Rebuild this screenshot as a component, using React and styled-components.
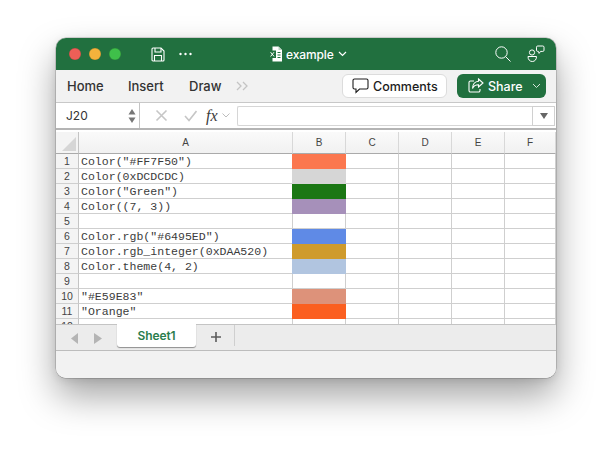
import React from 'react';
import styled, { createGlobalStyle } from 'styled-components';

const UI_FONT = '"Inter", "Liberation Sans", sans-serif';

const GlobalStyle = createGlobalStyle`
  html, body {
    margin: 0;
    padding: 0;
    background: #ffffff;
  }
  body {
    width: 612px;
    height: 452px;
    overflow: hidden;
  }
`;

const Page = styled.div`
  padding: 38px 56px 0;
`;

const Window = styled.div`
  width: 500px;
  height: 340px;
  border-radius: 10px;
  overflow: hidden;
  background: #f2f2f2;
  display: flex;
  flex-direction: column;
  box-shadow: 0 0 0 0.5px rgba(0, 0, 0, 0.28), 0 18px 36px rgba(0, 0, 0, 0.36), 0 2px 8px rgba(0, 0, 0, 0.1);
`;

//#region title bar
const TitleBar = styled.div`
  height: 32px;
  flex: none;
  background: #21703f;
  display: flex;
  align-items: center;
  padding-left: 13px;
  color: #fff;
  font-family: ${UI_FONT};
`;
const Lights = styled.div`
  display: flex;
  gap: 8px;
`;
const Light = styled.span`
  width: 12px;
  height: 12px;
  border-radius: 50%;
  background: ${props => props.$color};
  box-shadow: inset 0 0 0 0.5px rgba(0, 0, 0, 0.2);
`;
const SaveButton = styled.svg`
  margin-left: 30px;
  width: 14px;
  height: 15px;
`;
const Dots = styled.svg`
  margin-left: 14px;
  width: 13px;
  height: 4px;
`;
const FileIcon = styled.svg`
  margin-left: 77px;
  width: 13px;
  height: 16px;
`;
const FileName = styled.span`
  margin-left: 4px;
  font-size: 12px;
  font-weight: 500;
  letter-spacing: -0.1px;
`;
const TitleChevron = styled.svg`
  margin-left: 4px;
  width: 9px;
  height: 6px;
`;
const SearchIcon = styled.svg`
  margin-left: 148px;
  width: 16px;
  height: 16px;
`;
const PeopleIcon = styled.svg`
  margin-left: 16px;
  width: 18px;
  height: 18px;
`;
//#endregion

//#region ribbon
const Ribbon = styled.div`
  height: 32px;
  flex: none;
  box-sizing: border-box;
  background: #f2f2f2;
  display: flex;
  align-items: center;
  padding: 0 10px 0 11px;
  font-family: ${UI_FONT};
  font-size: 12.5px;
  font-weight: 500;
  color: #333;
`;
const RibbonTab = styled.span`
  width: ${props => props.$width}px;
  font-size: 13px;
`;
const MoreIcon = styled.svg`
  width: 13px;
  height: 10px;
`;
const RibbonActions = styled.div`
  margin-left: auto;
  display: flex;
  gap: 10px;
`;
const CommentsButton = styled.div`
  width: 105px;
  height: 24px;
  box-sizing: border-box;
  border: 1px solid #dcdcdc;
  border-radius: 6px;
  background: #fff;
  color: #1c1c1c;
  display: flex;
  align-items: center;
  gap: 4px;
  padding-left: 9px;
`;
const ShareButton = styled.div`
  width: 89px;
  height: 24px;
  box-sizing: border-box;
  border-radius: 6px;
  background: #21703f;
  color: #fff;
  display: flex;
  align-items: center;
  padding-left: 11px;
`;
const ShareLabel = styled.span`
  margin-left: 4px;
`;
const ShareChevron = styled.svg`
  margin-left: 9px;
  width: 9px;
  height: 6px;
`;
//#endregion

//#region formula bar
const FormulaBar = styled.div`
  height: 28px;
  flex: none;
  box-sizing: border-box;
  border-top: 1px solid #c8c8c8;
  border-bottom: 2px solid #b4b4b4;
  background: #fff;
  display: flex;
  font-family: ${UI_FONT};
`;
const NameBox = styled.div`
  width: 84px;
  box-sizing: border-box;
  background: #fff;
  border-right: 1px solid #c4c4c4;
  display: flex;
  align-items: center;
  justify-content: space-between;
  padding: 0 3px 0 10px;
  font-size: 12px;
  color: #333;
`;
const Stepper = styled.svg`
  width: 8px;
  height: 18px;
`;
const FormulaTools = styled.div`
  width: 97px;
  flex: none;
  box-sizing: border-box;
  display: flex;
  align-items: center;
  padding-left: 15px;
`;
const ToolIcon = styled.svg`
  width: 13px;
  height: 13px;
  margin-right: ${props => props.$gap}px;
`;
const FxLabel = styled.span`
  font-family: "Liberation Serif", serif;
  font-style: italic;
  font-size: 16px;
  color: #3c3c3c;
`;
const FxChevron = styled.svg`
  margin-left: 4px;
  width: 8px;
  height: 5px;
`;
const FormulaInput = styled.div`
  flex: 1;
  margin-top: 3px;
  height: 20px;
  box-sizing: border-box;
  border: 1px solid #d6d6d6;
  border-right: none;
  border-radius: 2px 0 0 2px;
`;
const FormulaDrop = styled.div`
  width: 23px;
  flex: none;
  margin: 3px 1px 0 0;
  height: 20px;
  box-sizing: border-box;
  border: 1px solid #d0d0d0;
  display: flex;
  align-items: center;
  justify-content: center;
`;
const DropArrow = styled.span`
  width: 0;
  height: 0;
  border-left: 4px solid transparent;
  border-right: 4px solid transparent;
  border-top: 6px solid #666;
`;
//#endregion

//#region sheet grid
const Sheet = styled.div`
  height: 194px;
  flex: none;
  overflow: hidden;
  background: #fff;
  display: grid;
  grid-template-columns: 23px 214px 53px 53px 53px 53px 51px;
  grid-template-rows: 22px;
  grid-auto-rows: 15px;
  padding-top: 2px;
  box-sizing: border-box;
`;
const Corner = styled.div`
  box-sizing: border-box;
  background: #f4f4f4;
  border-right: 1px solid #c4c4c4;
  border-bottom: 1px solid #aaa;
  position: relative;
  &::after {
    content: '';
    position: absolute;
    right: 2px;
    bottom: 2px;
    border-left: 14px solid transparent;
    border-bottom: 14px solid #d6d6d6;
  }
`;
const ColHead = styled.div`
  box-sizing: border-box;
  background: linear-gradient(#fafafa, #f1f1f1);
  border-right: 1px solid #d8d8d8;
  border-bottom: 1px solid #aaa;
  display: flex;
  align-items: center;
  justify-content: center;
  font-family: "Liberation Sans", sans-serif;
  font-size: 10px;
  color: #444;
`;
const RowHead = styled.div`
  box-sizing: border-box;
  background: #f4f4f4;
  border-right: 1px solid #c4c4c4;
  border-bottom: 1px solid #cfcfcf;
  display: flex;
  align-items: center;
  justify-content: center;
  font-family: "Liberation Sans", sans-serif;
  font-size: 10.5px;
  color: #444;
`;
const Cell = styled.div`
  box-sizing: border-box;
  border-right: 1px solid #cfcfcf;
  border-bottom: 1px solid #cfcfcf;
  padding: 1px 0 0 2px;
  font-family: "Liberation Mono", monospace;
  font-size: 11.55px;
  line-height: 14px;
  color: #3c3c3c;
  white-space: pre;
  overflow: hidden;
`;
const Swatch = styled.div`
  box-sizing: border-box;
  margin-left: -1px;
  background: ${props => props.$color};
  ${props => !props.$filled && 'border-right: 1px solid #cfcfcf; border-bottom: 1px solid #cfcfcf; border-left: 1px solid #cfcfcf;'}
`;
//#endregion

//#region sheet tabs
const TabBar = styled.div`
  height: 27px;
  flex: none;
  box-sizing: border-box;
  background: #ececec;
  border-top: 1px solid #c4c4c4;
  border-bottom: 1px solid #bdbdbd;
  display: flex;
  align-items: flex-start;
  font-family: ${UI_FONT};
`;
const TabArrows = styled.svg`
  margin: 8px 0 0 15px;
  width: 31px;
  height: 11px;
`;
const SheetTab = styled.div`
  margin: -1px 0 0 15px;
  width: 79px;
  height: 23px;
  box-sizing: border-box;
  background: #fff;
  border-radius: 0 0 3px 3px;
  box-shadow: 0 1px 1px rgba(0, 0, 0, 0.4);
  display: flex;
  align-items: center;
  justify-content: center;
  color: #2a7d4c;
  font-size: 12px;
  font-weight: 600;
  letter-spacing: -0.1px;
`;
const AddTab = styled.svg`
  margin: 7px 0 0 15px;
  width: 10px;
  height: 10px;
`;
const TabDivider = styled.div`
  margin: 0 0 0 13px;
  width: 1px;
  height: 21px;
  background: #cfcfcf;
`;
const StatusBar = styled.div`
  flex: 1;
  background: #f2f2f2;
`;
//#endregion

const columns = ['A', 'B', 'C', 'D', 'E', 'F'];

const rows = [
  { text: 'Color("#FF7F50")', color: '#fb774f' },
  { text: 'Color(0xDCDCDC)', color: '#d6d6d6' },
  { text: 'Color("Green")', color: '#1b7714' },
  { text: 'Color((7, 3))', color: '#a690ba' },
  { text: '', color: null },
  { text: 'Color.rgb("#6495ED")', color: '#5f8ae6' },
  { text: 'Color.rgb_integer(0xDAA520)', color: '#cf9b2d' },
  { text: 'Color.theme(4, 2)', color: '#b1c5e0' },
  { text: '', color: null },
  { text: '"#E59E83"', color: '#dd927a' },
  { text: '"Orange"', color: '#fb5f20' },
  { text: '', color: null },
];

const App = () => {
  return (
    <Page>
      <GlobalStyle />
      <Window>
        <TitleBar>
          <Lights>
            <Light $color="#ed5f57" />
            <Light $color="#f4b23c" />
            <Light $color="#3fc04a" />
          </Lights>
          <SaveButton viewBox="0 0 14 15" fill="none" stroke="#fff" strokeWidth="1.1">
            <path d="M2 1h8l3 3v9a1 1 0 0 1-1 1H2a1 1 0 0 1-1-1V2a1 1 0 0 1 1-1z" />
            <path d="M4 1v4h6V1M3.500 14V8.500h7V14" />
          </SaveButton>
          <Dots viewBox="0 0 13 4" fill="#fff">
            <circle cx="1.500" cy="2" r="1.200" />
            <circle cx="6.500" cy="2" r="1.200" />
            <circle cx="11.500" cy="2" r="1.200" />
          </Dots>
          <FileIcon viewBox="0 0 13 16">
            <path d="M3.500 .5h6l3.500 3.500v11.500H3.500z" fill="#fff" />
            <path d="M9.500 .5V4H13z" fill="#b9d4c3" />
            <path d="M8.500 6.500h3M8.500 9h3M8.500 11.500h3" stroke="#21703f" strokeWidth="1.200" />
            <rect x="0" y="4.500" width="7" height="7.500" fill="#21703f" />
            <path d="M1.600 6.200l3.400 4.200M5 6.200l-3.400 4.200" stroke="#fff" strokeWidth="1" />
          </FileIcon>
          <FileName>example</FileName>
          <TitleChevron viewBox="0 0 9 6" fill="none" stroke="#fff" strokeWidth="1.200">
            <path d="M1 1l3.500 3.500L8 1" />
          </TitleChevron>
          <SearchIcon viewBox="0 0 16 16" fill="none" stroke="#fff" strokeWidth="1">
            <circle cx="6.500" cy="6.500" r="5.700" />
            <path d="M10.700 10.700l4.800 4.800" />
          </SearchIcon>
          <PeopleIcon viewBox="0 0 18 18" fill="none" stroke="#fff" strokeWidth="1">
            <circle cx="5" cy="7.500" r="2.600" />
            <path d="M1 11.500h8.500c0 3-1.600 5-4.200 5S1 14.500 1 11.500z" />
            <path d="M9.500 2.200a1.200 1.200 0 0 1 1.200-1.200h5.100a1.200 1.200 0 0 1 1.200 1.200v3a1.200 1.200 0 0 1-1.200 1.200h-2.300l-1.400 2-.7-2h-.7a1.200 1.200 0 0 1-1.200-1.200z" />
          </PeopleIcon>
        </TitleBar>

        <Ribbon>
          <RibbonTab $width={61}>Home</RibbonTab>
          <RibbonTab $width={61}>Insert</RibbonTab>
          <RibbonTab $width={47}>Draw</RibbonTab>
          <MoreIcon viewBox="0 0 13 10" fill="none" stroke="#c4c4c4" strokeWidth="1.300">
            <path d="M1 1l4 4-4 4M7 1l4 4-4 4" />
          </MoreIcon>
          <RibbonActions>
            <CommentsButton>
              <svg width="17" height="16" viewBox="0 0 17 16" fill="none" stroke="#1c1c1c" strokeWidth="1.100">
                <path d="M2.500 1h12A1.500 1.500 0 0 1 16 2.500v7a1.500 1.500 0 0 1-1.500 1.500H7.500L4 14.500V11H2.500A1.500 1.500 0 0 1 1 9.500v-7A1.500 1.500 0 0 1 2.500 1z" />
              </svg>
              Comments
            </CommentsButton>
            <ShareButton>
              <svg width="16" height="16" viewBox="0 0 16 16" fill="none" stroke="#fff" strokeWidth="1.100">
                <path d="M6 3H2.500A1.500 1.500 0 0 0 1 4.500v8A1.500 1.500 0 0 0 2.500 14h8a1.500 1.500 0 0 0 1.500-1.500V11" />
                <path d="M10.500 1L15 5l-4.500 4V6.800C7.500 6.800 5.500 8 4.500 10.500 4.500 6.500 7 3.500 10.500 3.200z" />
              </svg>
              <ShareLabel>Share</ShareLabel>
              <ShareChevron viewBox="0 0 9 6" fill="none" stroke="#d5e5da" strokeWidth="1">
                <path d="M1 1l3.500 3.500L8 1" />
              </ShareChevron>
            </ShareButton>
          </RibbonActions>
        </Ribbon>

        <FormulaBar>
          <NameBox>
            J20
            <Stepper viewBox="0 0 8 18" fill="#777">
              <path d="M4 2l3.500 5.500h-7z" />
              <path d="M4 16l3.500-5.500h-7z" />
            </Stepper>
          </NameBox>
          <FormulaTools>
            <ToolIcon $gap={16} viewBox="0 0 13 13" fill="none" stroke="#c6c6c6" strokeWidth="1.600">
              <path d="M1.500 1.500l10 10M11.500 1.500l-10 10" />
            </ToolIcon>
            <ToolIcon $gap={9} viewBox="0 0 13 13" fill="none" stroke="#c6c6c6" strokeWidth="1.600">
              <path d="M1 7l4 4.500L12.500 2" />
            </ToolIcon>
            <FxLabel>fx</FxLabel>
            <FxChevron viewBox="0 0 8 5" fill="none" stroke="#bdbdbd" strokeWidth="1">
              <path d="M.5.500L4 4 7.500.500" />
            </FxChevron>
          </FormulaTools>
          <FormulaInput />
          <FormulaDrop>
            <DropArrow />
          </FormulaDrop>
        </FormulaBar>

        <Sheet>
          <Corner />
          {columns.map(col => <ColHead key={col}>{col}</ColHead>)}
          {rows.map((row, i) => (
            <React.Fragment key={i}>
              <RowHead>{i + 1}</RowHead>
              <Cell>{row.text}</Cell>
              <Swatch $color={row.color || '#fff'} $filled={!!row.color} />
              <Cell />
              <Cell />
              <Cell />
              <Cell />
            </React.Fragment>
          ))}
        </Sheet>

        <TabBar>
          <TabArrows viewBox="0 0 31 11" fill="#b4b4b4">
            <path d="M7 0v11L0 5.500z" />
            <path d="M23 0v11l8-5.500z" />
          </TabArrows>
          <SheetTab>Sheet1</SheetTab>
          <AddTab viewBox="0 0 10 10" fill="none" stroke="#5c5c5c" strokeWidth="1.600">
            <path d="M5 0v10M0 5h10" />
          </AddTab>
          <TabDivider />
        </TabBar>
        <StatusBar />
      </Window>
    </Page>
  );
};

export default App;
